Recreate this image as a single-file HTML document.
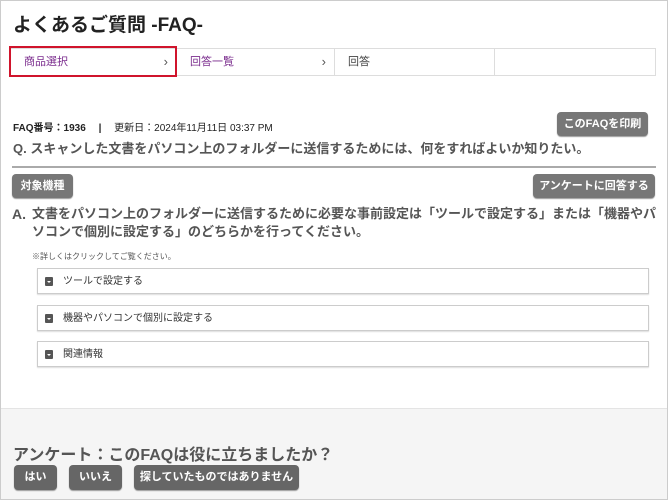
<!DOCTYPE html>
<html><head><meta charset="utf-8"><style>
*{margin:0;padding:0;box-sizing:border-box}
body{width:668px;height:500px;overflow:hidden;font-family:"Liberation Sans","Noto Sans CJK JP",sans-serif;background:#fff;position:relative;color:#333}
.frame{position:absolute;left:0;top:0;width:668px;height:500px;border:1px solid #ccc}
.abs{position:absolute}
h1{position:absolute;left:13px;top:10px;font-size:19px;font-weight:bold;color:#222}
.bc{position:absolute;left:10px;top:48px;width:646px;height:28px;border:1px solid #ddd;display:flex}
.bc div{height:26px;font-size:11px;line-height:26px;padding-left:13px;position:relative;border-right:1px solid #ddd}
.bc .ch:after{content:"›";position:absolute;right:8px;top:0;color:#555;font-size:13px}
.btn{position:absolute;background:#777;color:#fff;font-size:11px;font-weight:bold;border-radius:4px;text-align:center;box-shadow:0 1px 1px #999}
.acc{position:absolute;left:37px;width:612px;height:26px;border:1px solid #ccc;box-shadow:0 1px 1px #ddd;font-size:10px;line-height:25px;padding-left:25px;color:#333}
.acc:before{content:"";position:absolute;left:7px;top:8px;width:8px;height:9px;background:#555;border-radius:1px}
.acc:after{content:"";position:absolute;left:9px;top:12px;border-left:2px solid transparent;border-right:2px solid transparent;border-top:2px solid #fff}
</style></head><body>
<h1>よくあるご質問 -FAQ-</h1>
<div class="bc">
<div class="ch" style="width:166px;color:#7b2d8e">商品選択</div>
<div class="ch" style="width:158px;color:#7b2d8e">回答一覧</div>
<div style="width:160px;color:#444">回答</div>
<div style="width:160px;border-right:none"></div>
</div>
<div class="abs" style="left:9px;top:46px;width:168px;height:31px;border:2px solid #d0142c"></div>
<div class="abs" style="left:13px;top:119px;font-size:10px;color:#222;font-weight:bold">FAQ番号：1936　 |　 <span style="font-weight:normal">更新日：2024年11月11日 03:37 PM</span></div>
<div class="btn" style="left:557px;top:112px;width:91px;height:24px;line-height:24px">このFAQを印刷</div>
<div class="abs" style="left:13px;top:138px;font-size:13px;color:#555;font-weight:bold">Q. スキャンした文書をパソコン上のフォルダーに送信するためには、何をすればよいか知りたい。</div>
<div class="abs" style="left:12px;top:166px;width:644px;height:2px;background:#aaa"></div>
<div class="btn" style="left:12px;top:174px;width:61px;height:24px;line-height:24px">対象機種</div>
<div class="btn" style="left:533px;top:174px;width:122px;height:24px;line-height:24px">アンケートに回答する</div>
<div class="abs" style="left:12px;top:206px;font-size:14px;color:#555;font-weight:bold">A.</div>
<div class="abs" style="left:32px;top:205px;width:632px;font-size:13px;line-height:18px;color:#555;font-weight:bold">文書をパソコン上のフォルダーに送信するために必要な事前設定は「ツールで設定する」または「機器やパソコンで個別に設定する」のどちらかを行ってください。</div>
<div class="abs" style="left:32px;top:251px;font-size:8px;color:#555">※詳しくはクリックしてご覧ください。</div>
<div class="acc" style="top:268px">ツールで設定する</div>
<div class="acc" style="top:305px">機器やパソコンで個別に設定する</div>
<div class="acc" style="top:341px">関連情報</div>
<div class="abs" style="left:1px;top:408px;width:666px;height:91px;background:#f5f5f5;border-top:1px solid #e4e4e4"></div>
<div class="abs" style="left:13px;top:441px;font-size:16px;font-weight:bold;color:#555">アンケート：このFAQは役に立ちましたか？</div>
<div class="btn" style="left:14px;top:465px;width:43px;height:25px;line-height:25px;background:#666">はい</div>
<div class="btn" style="left:69px;top:465px;width:53px;height:25px;line-height:25px;background:#666">いいえ</div>
<div class="btn" style="left:134px;top:465px;width:165px;height:25px;line-height:25px;background:#666">探していたものではありません</div>
<div class="frame"></div>
</body></html>
